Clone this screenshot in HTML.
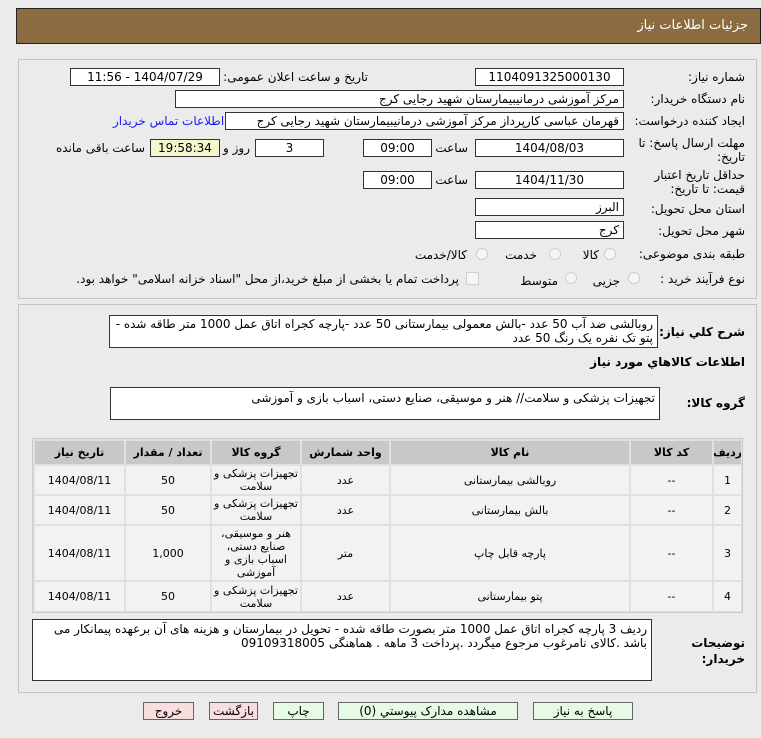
<!DOCTYPE html>
<html><head><meta charset="utf-8"><style>
*{box-sizing:border-box;margin:0;padding:0}
body{width:761px;height:738px;background:#ebebeb;font-family:Tahoma,"DejaVu Sans","Liberation Sans","Noto Sans CJK SC",sans-serif;font-size:12px;color:#000;position:relative;overflow:hidden;direction:rtl}
.a{position:absolute}
.hd{left:16px;top:8px;width:745px;height:36px;background:#8b6b3f;border:1px solid #222;color:#fff;font-size:13px;padding:9px 12px 0 0;text-align:right}
.pn{border:1px solid #c4c4c4;background:#ebebeb}
.in{position:absolute;background:#fff;border:1px solid #333;height:18px;line-height:16px;padding:0 4px;white-space:nowrap;overflow:hidden}
.c{text-align:center}
.lb{position:absolute;white-space:nowrap}
.rd{position:absolute;width:12px;height:12px;border-radius:50%;border:1px solid #cfcfcf;background:#f6f6f6}
.ta{position:absolute;background:#fff;border:1px solid #333;padding:2px 4px;line-height:17px}
.tb{position:absolute;left:32px;top:438px;width:711px;height:175px;background:#e0e0e0;border:1px solid #cacaca}
.h,.d{position:absolute;display:flex;align-items:center;justify-content:center;text-align:center;overflow:hidden}
.h{background:#c8c8c8;font-weight:bold;font-size:11px}
.d{background:#f2f2f2;font-size:11px;line-height:13px}
.bt{position:absolute;top:702px;height:18px;border:1px solid #666;background:#e6fae6;text-align:center;line-height:16px}
.pk{background:#f8dede}
</style></head><body>
<div class="a hd">جزئیات اطلاعات نیاز</div>
<div class="a pn" style="left:18px;top:59px;width:739px;height:240px"></div>
<div class="a pn" style="left:18px;top:304px;width:739px;height:389px"></div>

<div class="lb" style="right:16px;top:70px">شماره نیاز:</div>
<div class="in c" style="left:475px;top:68px;width:149px">1104091325000130</div>
<div class="lb" style="right:393px;top:70px">تاریخ و ساعت اعلان عمومی:</div>
<div class="in c" style="left:70px;top:68px;width:150px">1404/07/29 - 11:56</div>

<div class="lb" style="right:16px;top:92px">نام دستگاه خریدار:</div>
<div class="in" style="left:175px;top:90px;width:449px">مرکز آموزشی درمانیبیمارستان شهید رجایی کرج</div>

<div class="lb" style="right:16px;top:114px">ایجاد کننده درخواست:</div>
<div class="in" style="left:225px;top:112px;width:399px">قهرمان عباسی کارپرداز مرکز آموزشی درمانیبیمارستان شهید رجایی کرج</div>
<div class="lb" style="left:113px;top:114px;color:#1a1aff">اطلاعات تماس خریدار</div>

<div class="lb" style="right:16px;top:136px">مهلت ارسال پاسخ: تا</div>
<div class="lb" style="right:16px;top:150px">تاریخ:</div>
<div class="in c" style="left:475px;top:139px;width:149px">1404/08/03</div>
<div class="lb" style="right:293px;top:141px">ساعت</div>
<div class="in c" style="left:363px;top:139px;width:69px">09:00</div>
<div class="in c" style="left:255px;top:139px;width:69px">3</div>
<div class="lb" style="right:511px;top:141px">روز و</div>
<div class="in c" style="left:150px;top:139px;width:70px;background:#f6f6cc">19:58:34</div>
<div class="lb" style="right:616px;top:141px">ساعت باقی مانده</div>

<div class="lb" style="right:16px;top:168px">حداقل تاریخ اعتبار</div>
<div class="lb" style="right:16px;top:182px">قیمت: تا تاریخ:</div>
<div class="in c" style="left:475px;top:171px;width:149px">1404/11/30</div>
<div class="lb" style="right:293px;top:173px">ساعت</div>
<div class="in c" style="left:363px;top:171px;width:69px">09:00</div>

<div class="lb" style="right:16px;top:202px">استان محل تحویل:</div>
<div class="in" style="left:475px;top:198px;width:149px">البرز</div>
<div class="lb" style="right:16px;top:224px">شهر محل تحویل:</div>
<div class="in" style="left:475px;top:221px;width:149px">کرج</div>

<div class="lb" style="right:16px;top:247px">طبقه بندی موضوعی:</div>
<div class="rd" style="left:604px;top:248px"></div><div class="lb" style="right:162px;top:248px">کالا</div>
<div class="rd" style="left:549px;top:248px"></div><div class="lb" style="right:224px;top:248px">خدمت</div>
<div class="rd" style="left:476px;top:248px"></div><div class="lb" style="right:294px;top:248px">کالا/خدمت</div>

<div class="lb" style="right:16px;top:272px">نوع فرآیند خرید :</div>
<div class="rd" style="left:628px;top:272px"></div><div class="lb" style="right:141px;top:274px">جزیی</div>
<div class="rd" style="left:565px;top:272px"></div><div class="lb" style="right:203px;top:274px">متوسط</div>
<div class="a" style="left:466px;top:272px;width:13px;height:13px;border:1px solid #cfcfcf;background:#f6f6f6"></div>
<div class="lb" style="right:302px;top:272px">پرداخت تمام یا بخشی از مبلغ خرید،از محل "اسناد خزانه اسلامی" خواهد بود.</div>

<div class="lb" style="right:16px;top:325px;font-weight:bold">شرح کلي نياز:</div>
<div class="ta" style="left:109px;top:315px;width:549px;height:33px;line-height:14px;padding-top:1px">روبالشی ضد آب 50 عدد -بالش معمولی بیمارستانی 50 عدد -پارچه کجراه اتاق عمل 1000 متر طاقه شده - پتو تک نفره یک رنگ 50 عدد</div>

<div class="lb" style="right:16px;top:355px;font-weight:bold">اطلاعات كالاهاي مورد نياز</div>
<div class="lb" style="right:16px;top:396px;font-weight:bold">گروه کالا:</div>
<div class="ta" style="left:110px;top:387px;width:550px;height:33px">تجهیزات پزشکی و سلامت// هنر و موسیقی، صنایع دستی، اسباب بازی و آموزشی</div>

<div class="tb"></div>
<div class="h" style="left:714px;top:441px;width:27px;height:23px">ردیف</div>
<div class="h" style="left:631px;top:441px;width:81px;height:23px">کد کالا</div>
<div class="h" style="left:391px;top:441px;width:238px;height:23px">نام کالا</div>
<div class="h" style="left:302px;top:441px;width:87px;height:23px">واحد شمارش</div>
<div class="h" style="left:212px;top:441px;width:88px;height:23px">گروه کالا</div>
<div class="h" style="left:126px;top:441px;width:84px;height:23px">تعداد / مقدار</div>
<div class="h" style="left:35px;top:441px;width:89px;height:23px">تاریخ نیاز</div>

<div class="d" style="left:714px;top:466px;width:27px;height:28px">1</div>
<div class="d" style="left:631px;top:466px;width:81px;height:28px">--</div>
<div class="d" style="left:391px;top:466px;width:238px;height:28px">روبالشی بیمارستانی</div>
<div class="d" style="left:302px;top:466px;width:87px;height:28px">عدد</div>
<div class="d" style="left:212px;top:466px;width:88px;height:28px">تجهیزات پزشکی و سلامت</div>
<div class="d" style="left:126px;top:466px;width:84px;height:28px">50</div>
<div class="d" style="left:35px;top:466px;width:89px;height:28px">1404/08/11</div>

<div class="d" style="left:714px;top:496px;width:27px;height:28px">2</div>
<div class="d" style="left:631px;top:496px;width:81px;height:28px">--</div>
<div class="d" style="left:391px;top:496px;width:238px;height:28px">بالش بیمارستانی</div>
<div class="d" style="left:302px;top:496px;width:87px;height:28px">عدد</div>
<div class="d" style="left:212px;top:496px;width:88px;height:28px">تجهیزات پزشکی و سلامت</div>
<div class="d" style="left:126px;top:496px;width:84px;height:28px">50</div>
<div class="d" style="left:35px;top:496px;width:89px;height:28px">1404/08/11</div>

<div class="d" style="left:714px;top:526px;width:27px;height:54px">3</div>
<div class="d" style="left:631px;top:526px;width:81px;height:54px">--</div>
<div class="d" style="left:391px;top:526px;width:238px;height:54px">پارچه قابل چاپ</div>
<div class="d" style="left:302px;top:526px;width:87px;height:54px">متر</div>
<div class="d" style="left:212px;top:526px;width:88px;height:54px">هنر و موسیقی، صنایع دستی، اسباب بازی و آموزشی</div>
<div class="d" style="left:126px;top:526px;width:84px;height:54px">1,000</div>
<div class="d" style="left:35px;top:526px;width:89px;height:54px">1404/08/11</div>

<div class="d" style="left:714px;top:582px;width:27px;height:29px">4</div>
<div class="d" style="left:631px;top:582px;width:81px;height:29px">--</div>
<div class="d" style="left:391px;top:582px;width:238px;height:29px">پتو بیمارستانی</div>
<div class="d" style="left:302px;top:582px;width:87px;height:29px">عدد</div>
<div class="d" style="left:212px;top:582px;width:88px;height:29px">تجهیزات پزشکی و سلامت</div>
<div class="d" style="left:126px;top:582px;width:84px;height:29px">50</div>
<div class="d" style="left:35px;top:582px;width:89px;height:29px">1404/08/11</div>

<div class="lb" style="right:16px;top:636px;font-weight:bold">توضیحات</div>
<div class="lb" style="right:16px;top:652px;font-weight:bold">خریدار:</div>
<div class="ta" style="left:32px;top:619px;width:620px;height:62px;line-height:14px">ردیف 3 پارچه کجراه اتاق عمل 1000 متر بصورت طاقه شده - تحویل در بیمارستان و هزینه های آن برعهده پیمانکار می باشد .کالای نامرغوب مرجوع میگردد .پرداخت 3 ماهه . هماهنگی 09109318005</div>

<div class="bt" style="left:533px;width:100px">پاسخ به نیاز</div>
<div class="bt" style="left:338px;width:180px">مشاهده مدارک پیوستي (0)</div>
<div class="bt" style="left:273px;width:51px">چاپ</div>
<div class="bt pk" style="left:209px;width:49px">بازگشت</div>
<div class="bt pk" style="left:143px;width:51px">خروج</div>
</body></html>
